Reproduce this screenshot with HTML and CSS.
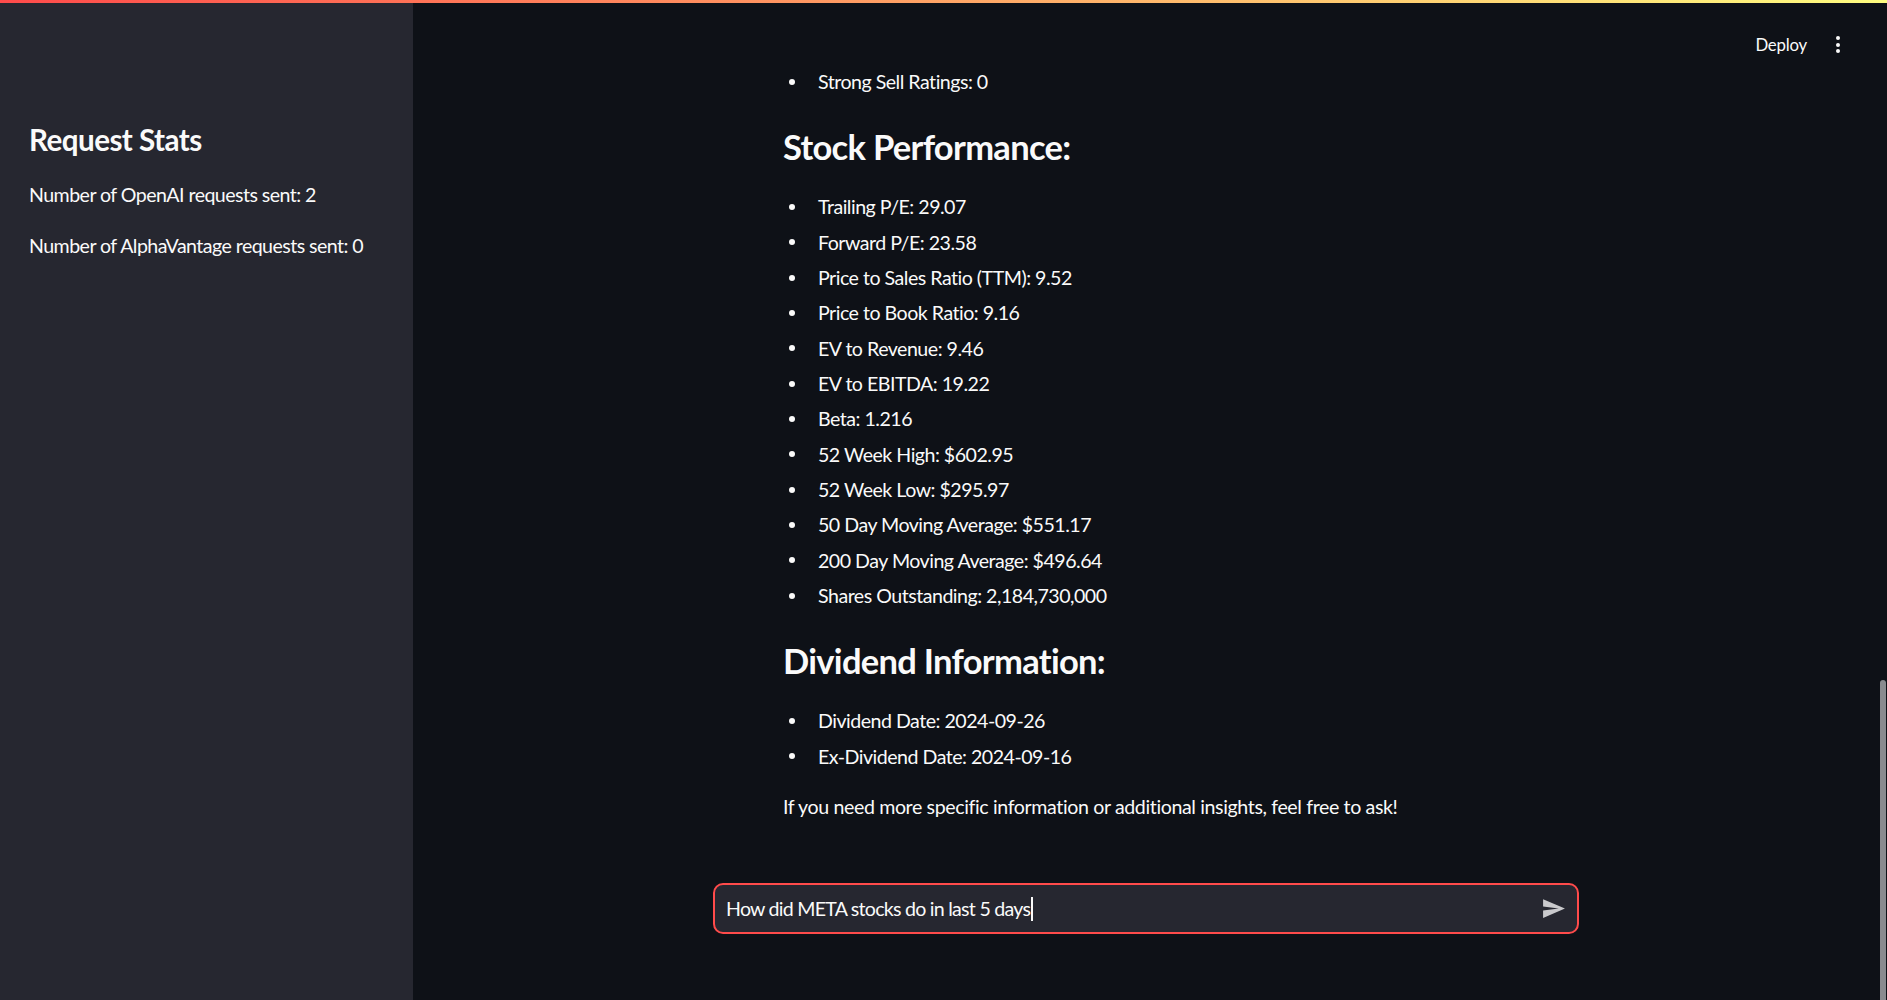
FILE: index.html
```html
<!DOCTYPE html>
<html lang="en">
<head>
<meta charset="utf-8">
<title>Stock Chat</title>
<link rel="stylesheet" href="styles.css">
</head>
<body>
<div class="decoration"></div>
<div class="app">
  <aside class="sidebar">
    <h2 class="side-title">Request Stats</h2>
    <p class="side-text">Number of OpenAI requests sent: 2</p>
    <p class="side-text">Number of AlphaVantage requests sent: 0</p>
  </aside>
  <main class="main">
    <header class="topbar">
      <span class="deploy">Deploy</span>
      <span class="kebab"><i></i><i></i><i></i></span>
    </header>
    <section class="content">
      <div class="block">
        <div class="message">
          <ul class="list">
            <li>Strong Sell Ratings: 0</li>
          </ul>
          <h3 class="heading">Stock Performance:</h3>
          <ul class="list">
            <li>Trailing P/E: 29.07</li>
            <li>Forward P/E: 23.58</li>
            <li>Price to Sales Ratio (TTM): 9.52</li>
            <li>Price to Book Ratio: 9.16</li>
            <li>EV to Revenue: 9.46</li>
            <li>EV to EBITDA: 19.22</li>
            <li>Beta: 1.216</li>
            <li>52 Week High: $602.95</li>
            <li>52 Week Low: $295.97</li>
            <li>50 Day Moving Average: $551.17</li>
            <li>200 Day Moving Average: $496.64</li>
            <li>Shares Outstanding: 2,184,730,000</li>
          </ul>
          <h3 class="heading">Dividend Information:</h3>
          <ul class="list">
            <li>Dividend Date: 2024-09-26</li>
            <li>Ex-Dividend Date: 2024-09-16</li>
          </ul>
          <p class="closing">If you need more specific information or additional insights, feel free to ask!</p>
        </div>
      </div>
    </section>
    <footer class="bottom">
      <div class="chat-input">
        <span class="chat-text">How did META stocks do in last 5 days<span class="caret"></span></span>
        <svg class="send" viewBox="0 0 24 24" width="25" height="25" aria-hidden="true"><path d="M2.01 21L23 12 2.01 3 2 10l15 2-15 2z" fill="currentColor"/></svg>
      </div>
    </footer>
    <div class="scroll-thumb"></div>
  </main>
</div>
</body>
</html>
```
FILE: styles.css
```css
* { box-sizing: border-box; }
html, body {
  margin: 0;
  padding: 0;
  height: 100%;
  overflow: hidden;
}
body {
  background: #0e1117;
  color: #fafafa;
  font-family: Lato, "Liberation Sans", sans-serif;
  font-size: 19.6px;
  letter-spacing: -0.5px;
}
.decoration {
  height: 3px;
  background: linear-gradient(90deg, #ff4b4b, #fffd80);
}
.app {
  display: flex;
  height: calc(100vh - 3px);
}
.sidebar {
  width: 413px;
  flex: none;
  background: #262730;
  padding: 117px 30px 0 29px;
}
.side-title {
  margin: 0 0 18.5px 0;
  font-size: 29.6px;
  line-height: 40px;
  font-weight: 700;
  letter-spacing: -0.55px;
}
.side-text {
  margin: 0 0 19.6px 0;
  line-height: 31.4px;
  letter-spacing: -0.55px;
}
.main {
  flex: 1;
  display: flex;
  flex-direction: column;
  padding-right: 8px;
  position: relative;
  min-width: 0;
}
.topbar {
  height: 61px;
  flex: none;
  display: flex;
  justify-content: flex-end;
  align-items: flex-start;
  padding-top: 29px;
  padding-right: 39px;
  gap: 29px;
}
.deploy {
  font-size: 16.8px;
  line-height: 26px;
  letter-spacing: -0.2px;
}
.kebab {
  display: flex;
  flex-direction: column;
  gap: 2.6px;
  padding-top: 4px;
}
.kebab i {
  display: block;
  width: 4px;
  height: 4px;
  border-radius: 50%;
  background: #fafafa;
}
.content {
  flex: 1;
  overflow: hidden;
  min-height: 0;
}
.block {
  width: 866px;
  margin: 0 auto;
}
.message {
  padding-left: 70px;
}
.list {
  list-style: none;
  margin: 0;
  padding: 0;
}
.list li {
  display: flex;
  align-items: center;
  line-height: 35.33px;
}
.list li::before {
  content: "";
  flex: none;
  width: 6px;
  height: 6px;
  border-radius: 50%;
  background: #fafafa;
  margin-left: 6px;
  margin-right: 23px;
}
.heading {
  margin: 25.5px 0 20.5px 0;
  font-size: 34.5px;
  line-height: 44px;
  font-weight: 700;
  letter-spacing: -0.7px;
}
.closing {
  margin: 15.3px 0 0 0;
  line-height: 35.33px;
  letter-spacing: -0.38px;
}
.bottom {
  flex: none;
  padding-bottom: 66px;
}
.chat-input {
  width: 866px;
  height: 51px;
  margin: 0 auto;
  border: 2px solid #ff4b4b;
  border-radius: 10px;
  background: #262730;
  display: flex;
  align-items: center;
  justify-content: space-between;
  padding: 0 11px 0 11px;
}
.chat-text {
  display: flex;
  align-items: center;
  line-height: 28px;
  letter-spacing: -0.75px;
}
.caret {
  display: inline-block;
  width: 1.5px;
  height: 24px;
  background: #fafafa;
  margin-left: 1px;
}
.send {
  color: #c9c9cc;
  flex: none;
}
.scroll-thumb {
  position: absolute;
  right: 1px;
  top: 677px;
  bottom: 0;
  width: 6px;
  border-radius: 3px 3px 0 0;
  background: #8a8b8f;
}
```
